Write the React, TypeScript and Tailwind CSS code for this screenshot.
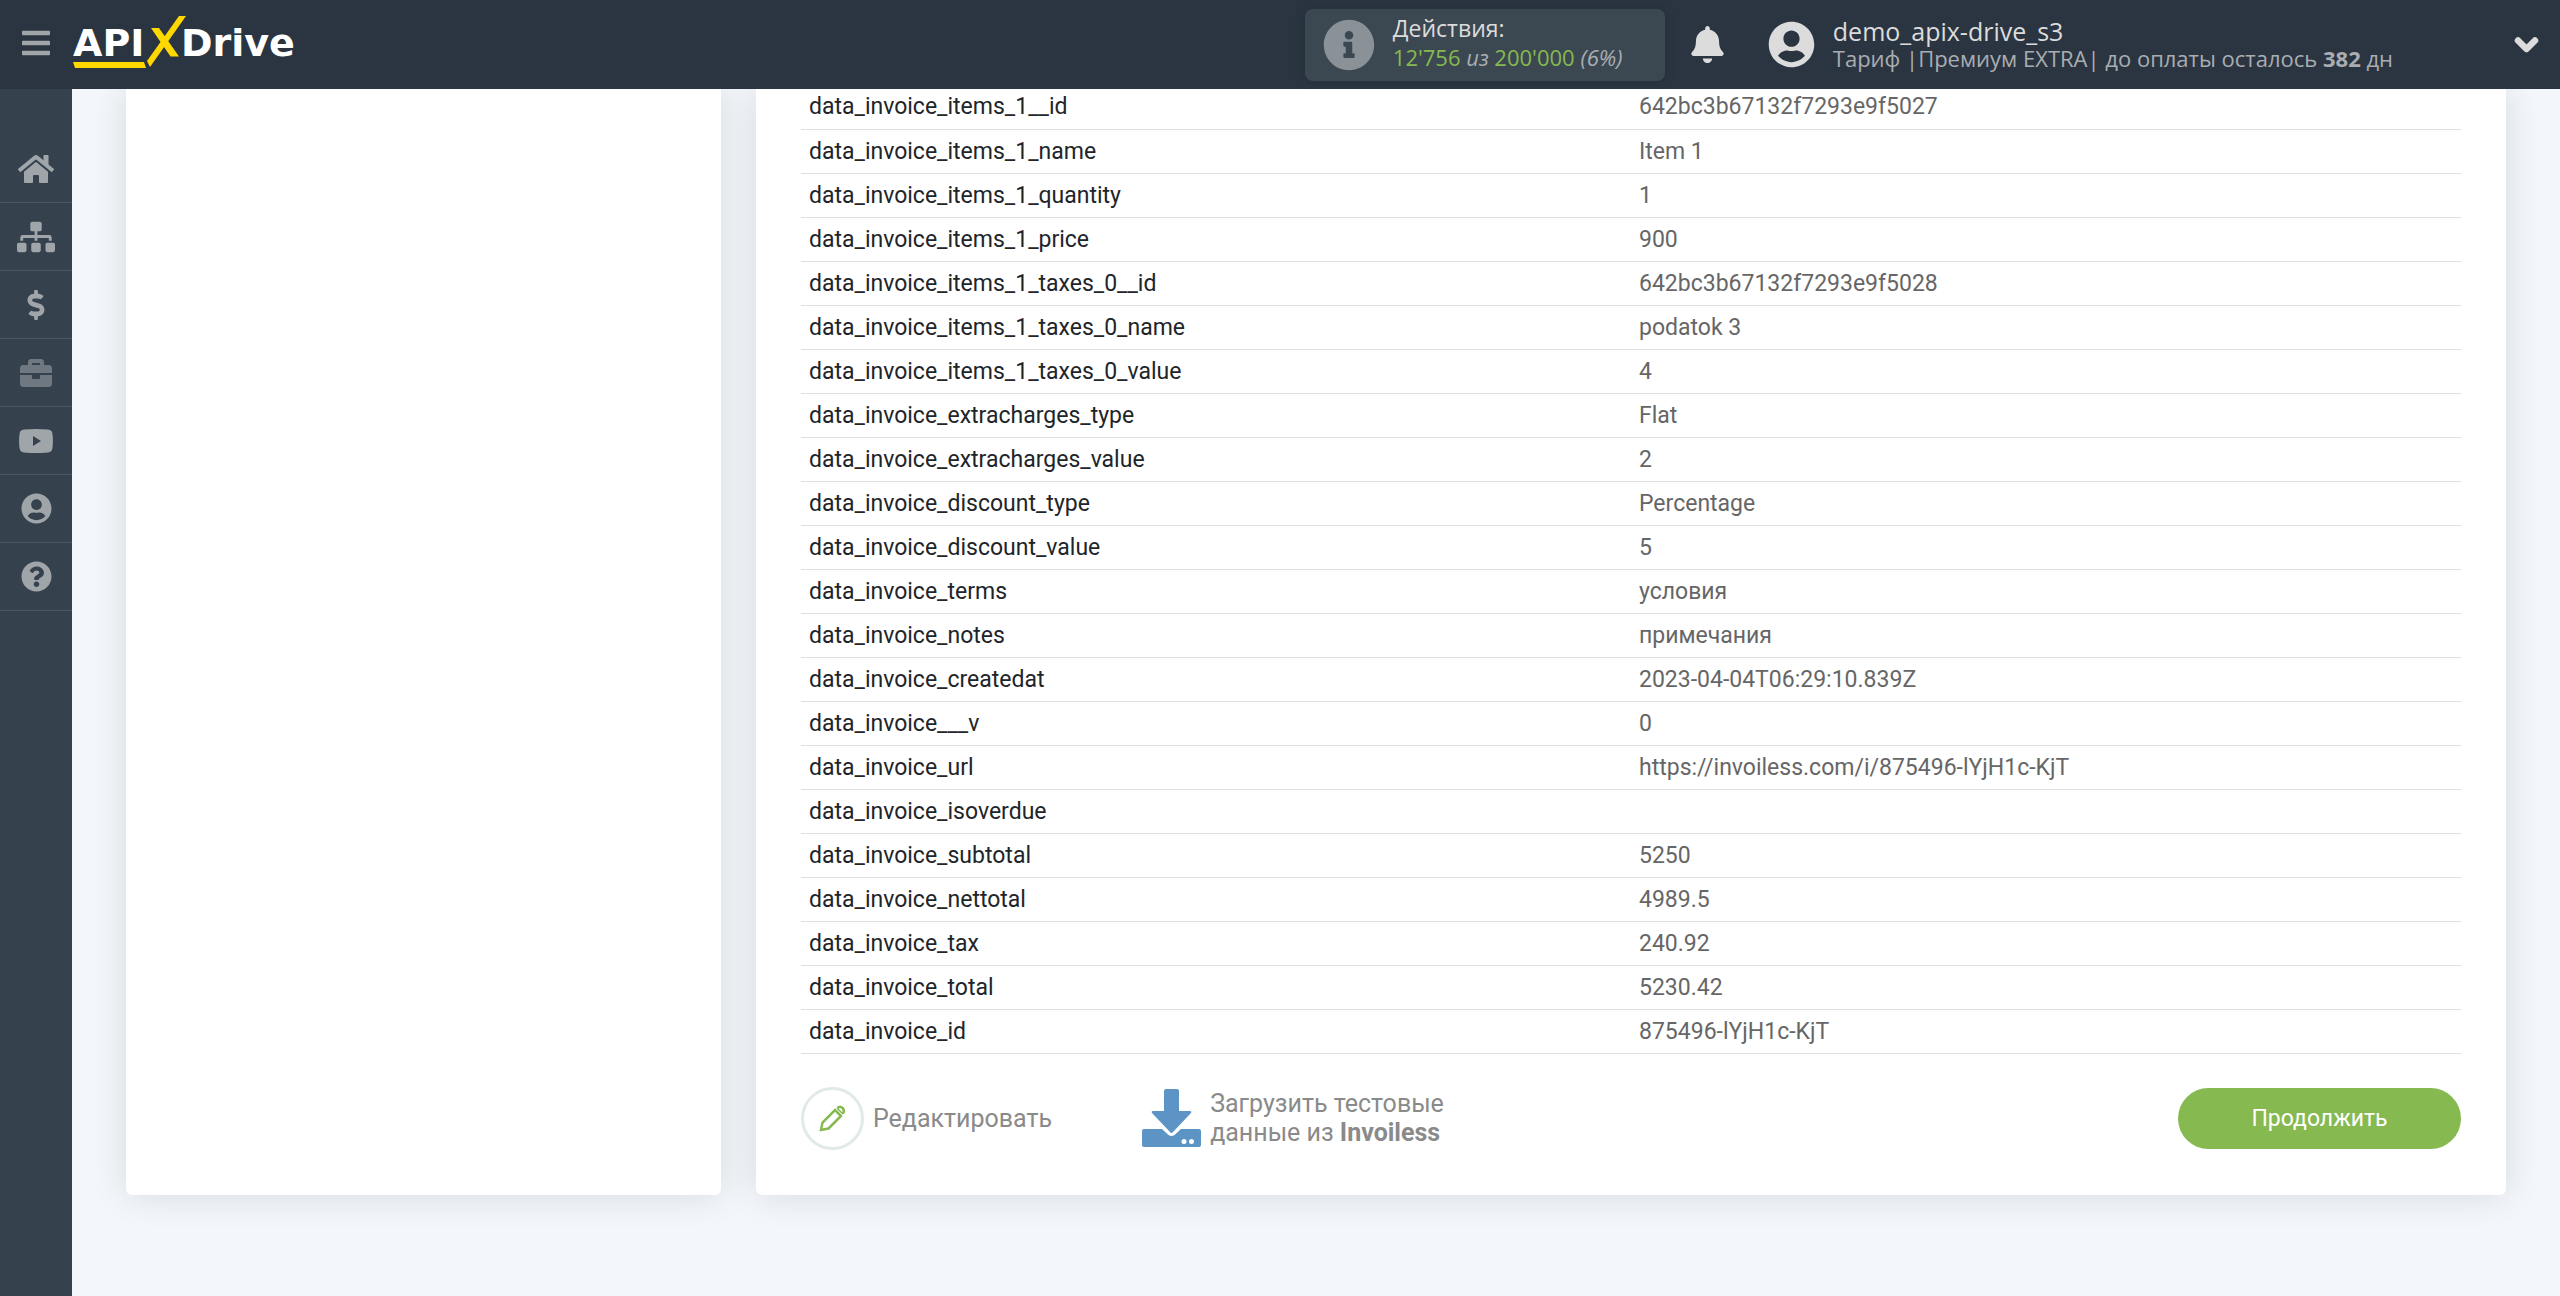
import type { ReactNode } from "react";
import {
  FaBars,
  FaBell,
  FaBriefcase,
  FaDollarSign,
  FaHome,
  FaInfoCircle,
  FaQuestionCircle,
  FaSitemap,
  FaUserCircle,
} from "react-icons/fa";

type Field = { name: string; value: string };

const FIELDS: Field[] = [
  { name: "data_invoice_items_1__id",           value: "642bc3b67132f7293e9f5027" },
  { name: "data_invoice_items_1_name",          value: "Item 1" },
  { name: "data_invoice_items_1_quantity",      value: "1" },
  { name: "data_invoice_items_1_price",         value: "900" },
  { name: "data_invoice_items_1_taxes_0__id",   value: "642bc3b67132f7293e9f5028" },
  { name: "data_invoice_items_1_taxes_0_name",  value: "podatok 3" },
  { name: "data_invoice_items_1_taxes_0_value", value: "4" },
  { name: "data_invoice_extracharges_type",     value: "Flat" },
  { name: "data_invoice_extracharges_value",    value: "2" },
  { name: "data_invoice_discount_type",         value: "Percentage" },
  { name: "data_invoice_discount_value",        value: "5" },
  { name: "data_invoice_terms",                 value: "условия" },
  { name: "data_invoice_notes",                 value: "примечания" },
  { name: "data_invoice_createdat",             value: "2023-04-04T06:29:10.839Z" },
  { name: "data_invoice___v",                   value: "0" },
  { name: "data_invoice_url",                   value: "https://invoiless.com/i/875496-lYjH1c-KjT" },
  { name: "data_invoice_isoverdue",             value: "" },
  { name: "data_invoice_subtotal",              value: "5250" },
  { name: "data_invoice_nettotal",              value: "4989.5" },
  { name: "data_invoice_tax",                   value: "240.92" },
  { name: "data_invoice_total",                 value: "5230.42" },
  { name: "data_invoice_id",                    value: "875496-lYjH1c-KjT" },
];

type NavItem = { label: string; icon: ReactNode; muted?: boolean };

const NAV: NavItem[] = [
  { label: "Главная",   icon: <FaHome size={36} /> },
  { label: "Связи",     icon: <FaSitemap size={38} /> },
  { label: "Оплата",    icon: <FaDollarSign size={30} /> },
  { label: "Проекты",   icon: <FaBriefcase size={32} />, muted: true },
  { label: "Видео",     icon: <VideoIcon /> },
  { label: "Профиль",   icon: <FaUserCircle size={31} /> },
  { label: "Помощь",    icon: <FaQuestionCircle size={31} /> },
];

export default function App() {
  return (
    <div className="flex min-h-screen flex-col bg-[#f3f6fb] font-['Roboto',sans-serif]">
      <Header />
      <div className="flex flex-1">
        <Sidebar />
        <main className="flex flex-1 gap-[35px] px-[54px] pb-[101px]">
          <section className="w-1/4 rounded-b-md bg-white shadow-[0_0_36px_rgba(0,0,0,0.12)]" />
          <section className="flex-1 rounded-b-md bg-white px-[45px] pb-[45px] shadow-[0_0_36px_rgba(0,0,0,0.12)]">
            <FieldTable />
            <Actions />
          </section>
        </main>
      </div>
    </div>
  );
}

function Header() {
  return (
    <header className="sticky top-0 z-10 flex h-[89px] items-center bg-[#2b3541] font-['Open_Sans',sans-serif] text-[#dcdcdc]">
      <button type="button" aria-label="Меню" className="flex w-[72px] justify-center pb-1 text-[#a0a5a9]">
        <FaBars size={32} />
      </button>
      <a href="#" aria-label="APIXDrive">
        <Logo />
      </a>

      <div className="ml-auto flex h-[72px] w-[360px] items-center gap-[18px] rounded-lg bg-[#3c4851] pl-[18px] shadow-[0_0_12px_rgba(0,0,0,0.15)]">
        <FaInfoCircle size={52} className="text-[#8a9197]" />
        <div className="pb-1 leading-[29px]">
          <div className="text-[23px]">Действия:</div>
          <div className="text-[22px] text-[#a9adb1]">
            <span className="text-[#86b94f]">12'756</span> <i>из</i>{" "}
            <span className="text-[#86b94f]">200'000</span> <i>(6%)</i>
          </div>
        </div>
      </div>

      <button type="button" aria-label="Уведомления" className="ml-6">
        <FaBell size={37} />
      </button>
      <div className="ml-[42px] flex items-center gap-[18px]">
        <FaUserCircle size={47} />
        <div className="leading-[27px]">
          <div className="text-[25px]">demo_apix-drive_s3</div>
          <div className="text-[22px] text-[#a9adb1]">
            Тариф |Премиум EXTRA| до оплаты осталось <b>382</b> дн
          </div>
        </div>
      </div>
      <button type="button" aria-label="Аккаунт" className="mr-[21px] ml-[121px]">
        <ChevronIcon />
      </button>
    </header>
  );
}

function Sidebar() {
  return (
    <nav className="w-[72px] bg-[#36414e] pt-[46px]">
      {NAV.map((item) => (
        <a
          key={item.label}
          href="#"
          aria-label={item.label}
          className={`flex h-[68px] items-center justify-center border-b border-[#4a5661] ${
            item.muted ? "text-[#6f7881]" : "text-[#a0a5a9]"
          }`}
        >
          {item.icon}
        </a>
      ))}
    </nav>
  );
}

function FieldTable() {
  return (
    <table className="-mt-1 w-full table-fixed text-[23px] leading-[43px]">
      <tbody>
        {FIELDS.map((f) => (
          <tr key={f.name} className="h-11 border-b border-[#dee0e1]">
            <th scope="row" className="px-2 text-left font-normal text-[#212529]">
              {f.name}
            </th>
            <td className="px-2 text-[#666666]">{f.value}</td>
          </tr>
        ))}
      </tbody>
    </table>
  );
}

function Actions() {
  return (
    <div className="flex items-center pt-[33px] text-[25px] leading-[29px] text-[#8a8a8a]">
      <button type="button" className="flex items-center gap-[9px]">
        <span className="flex size-[63px] items-center justify-center rounded-full border-3 border-[#e1eae9]">
          <PencilIcon />
        </span>
        Редактировать
      </button>
      <button type="button" className="ml-[90px] flex items-center gap-[9px] text-left">
        <DownloadIcon />
        <span>
          Загрузить тестовые
          <br />
          данные из <b>Invoiless</b>
        </span>
      </button>
      <button
        type="button"
        className="ml-auto h-[61px] w-[283px] rounded-full bg-[#86b94f] text-[23px] text-white"
      >
        Продолжить
      </button>
    </div>
  );
}

// Wordmark with the yellow tick that runs from the underline up through the X
function Logo() {
  return (
    <svg width="222" height="57" viewBox="72 16 222 57" className="font-['DejaVu_Sans',sans-serif]">
      <g fill="#fff" fontSize="38" fontWeight="700">
        <text x="73" y="56">API</text>
        <text x="181" y="56">Drive</text>
      </g>
      <g fill="#ffd800">
        <path d="M73 62h71l2 6H75z" />
        <path d="M151 28h8l20 28.500h-8.500z" />
        <path d="M179 16h7L150 67l-3-6z" />
      </g>
    </svg>
  );
}

function ChevronIcon() {
  return (
    <svg
      width="25"
      height="16"
      viewBox="0 0 25 16"
      fill="none"
      stroke="currentColor"
      strokeWidth="6.500"
      strokeLinecap="round"
      strokeLinejoin="round"
    >
      <path d="M4 3.500l8.500 8.500L21 3.500" />
    </svg>
  );
}

function VideoIcon() {
  return (
    <svg width="34" height="24" viewBox="0 0 34 24" fill="currentColor">
      <path
        fillRule="evenodd"
        d="M5 .6Q17-.4 29 .6q4 .3 4.500 4.400.8 7 0 14-.5 4.100-4.500 4.400-12 1-24 0Q1 23.100.5 19q-.8-7 0-14Q1 .9 5 .6zM14 7v10l8-5z"
      />
    </svg>
  );
}

function PencilIcon() {
  return (
    <svg width="27" height="27" viewBox="0 0 27 27" fill="none" stroke="#86b94f" strokeWidth="2.500">
      <path d="M2 25l1.500-7.500L16 5l6 6L9.500 23.500z" />
      <path d="M18.500 3q2.500-2.500 5 0t.5 5.500" />
      <path d="M18 3l6 6" strokeWidth="1.500" />
    </svg>
  );
}

function DownloadIcon() {
  return (
    <svg width="59" height="58" viewBox="0 0 59 58" fill="#5d94c6">
      <path d="M24 0h11q2 0 2 2v20h11q2 0 1 2L31 43q-1.500 2-3 0L10 24q-1-2 1-2h11V2q0-2 2-2z" />
      <path
        fillRule="evenodd"
        d="M2 40h18l6.500 6q3 2 6 0L39 40h18q2 0 2 2v14q0 2-2 2H2q-2 0-2-2V42q0-2 2-2zm40 10a2.500 2.500 0 1 0 0 5 2.500 2.500 0 0 0 0-5zm7.500 0a2.500 2.500 0 1 0 0 5 2.500 2.500 0 0 0 0-5z"
      />
    </svg>
  );
}
